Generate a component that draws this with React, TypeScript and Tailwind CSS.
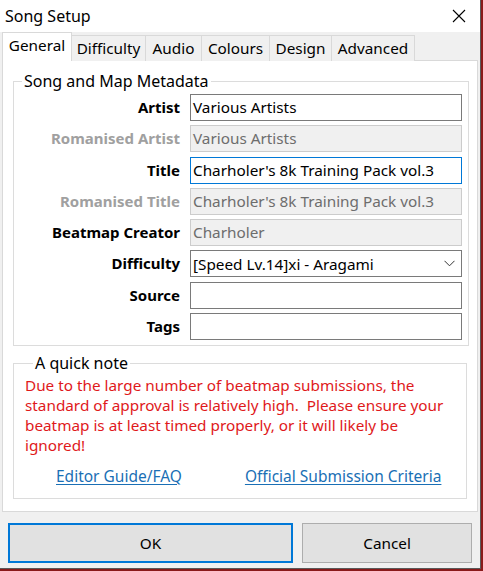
import type { ReactNode } from 'react'

const font = { fontFamily: '"Noto Sans", "Open Sans", "Noto Sans CJK SC", sans-serif' }

interface FieldRowProps {
  label: string
  labelMuted?: boolean
  children: ReactNode
}

function FieldRow({ label, labelMuted, children }: FieldRowProps) {
  return (
    <div className="flex items-center h-[27px]">
      <div
        className={`w-[166px] text-right font-bold text-[15px] leading-none ${labelMuted ? 'text-[#a0a0a0]' : 'text-black'}`}
      >
        {label}
      </div>
      <div className="ml-[10px] w-[272px] h-full">{children}</div>
    </div>
  )
}

function TextBox({ value, variant = 'normal' }: { value?: string; variant?: 'normal' | 'disabled' | 'focus' }) {
  const cls =
    variant === 'disabled'
      ? 'bg-[#f0f0f0] border-[#cccccc] text-[#6d6d6d]'
      : variant === 'focus'
        ? 'bg-white border-[#0078d7] text-black'
        : 'bg-white border-[#7a7a7a] text-black'
  return (
    <div className={`h-full border px-[2px] flex items-center text-[15.3px] whitespace-nowrap overflow-hidden ${cls}`}>
      {value}
    </div>
  )
}

const tabs = [
  { name: 'General', w: 'w-[70px]' },
  { name: 'Difficulty', w: 'w-[74px]' },
  { name: 'Audio', w: 'w-[56px]' },
  { name: 'Colours', w: 'w-[68px]' },
  { name: 'Design', w: 'w-[62px]' },
  { name: 'Advanced', w: 'w-[83px]' },
]

export default function App() {
  return (
    <div className="w-[483px] h-[571px] bg-[#8a1a1a] overflow-hidden" style={font}>
      <div className="w-[481px] h-[569px] bg-[#f0f0f0] border-r border-b border-[#5a5a5a] flex flex-col">
        {/* title bar */}
        <div className="h-[32px] bg-white flex items-center justify-between pl-[5px] pr-[14px] shrink-0">
          <span className="text-[16px] text-black">Song Setup</span>
          <svg width="14" height="14" viewBox="0 0 14 14" className="text-black">
            <path d="M1 1L13 13M13 1L1 13" stroke="currentColor" strokeWidth="1.1" fill="none" />
          </svg>
        </div>

        {/* tab strip */}
        <div className="h-[29px] flex items-end pl-[2px] relative z-10 shrink-0">
          {tabs.map((t, i) =>
            i === 0 ? (
              <div
                key={t.name}
                className={`${t.w} h-[29px] bg-white border border-b-0 border-[#d9d9d9] flex items-center justify-center text-[15.3px] text-black pb-[3px]`}
              >
                {t.name}
              </div>
            ) : (
              <div
                key={t.name}
                className={`${t.w} h-[26px] bg-[#f0f0f0] border border-l-0 border-b-0 border-[#d9d9d9] flex items-center justify-center text-[15.3px] text-black pb-[1px]`}
              >
                {t.name}
              </div>
            ),
          )}
        </div>

        {/* tab page */}
        <div className="ml-[2px] w-[476px] h-[452px] -mt-px bg-white border border-[#d9d9d9] px-[10px] pt-[11px] flex flex-col shrink-0">
          <fieldset className="border border-[#dcdcdc] pl-0 pr-[6px] pt-[4px] pb-[5px] h-[274px]">
            <legend className="ml-[8px] px-[2px] text-[16px] leading-[18px] text-black">Song and Map Metadata</legend>
            <div className="flex flex-col gap-[4.3px]">
              <FieldRow label="Artist">
                <TextBox value="Various Artists" />
              </FieldRow>
              <FieldRow label="Romanised Artist" labelMuted>
                <TextBox value="Various Artists" variant="disabled" />
              </FieldRow>
              <FieldRow label="Title">
                <TextBox value="Charholer's 8k Training Pack vol.3" variant="focus" />
              </FieldRow>
              <FieldRow label="Romanised Title" labelMuted>
                <TextBox value="Charholer's 8k Training Pack vol.3" variant="disabled" />
              </FieldRow>
              <FieldRow label="Beatmap Creator">
                <TextBox value="Charholer" variant="disabled" />
              </FieldRow>
              <FieldRow label="Difficulty">
                <div className="h-full border border-[#7a7a7a] bg-white pl-[2px] pr-[6px] flex items-center justify-between text-[15.3px] text-black">
                  <span>[Speed Lv.14]xi - Aragami</span>
                  <svg width="11" height="7" viewBox="0 0 11 7">
                    <path d="M0.5 0.8L5.5 5.8L10.5 0.8" stroke="#333" strokeWidth="1" fill="none" />
                  </svg>
                </div>
              </FieldRow>
              <FieldRow label="Source">
                <TextBox />
              </FieldRow>
              <FieldRow label="Tags">
                <TextBox />
              </FieldRow>
            </div>
          </fieldset>

          <fieldset className="mt-[8px] border border-[#dcdcdc] pl-[11px] pr-[8px] pt-[3px] h-[145px]">
            <legend className="ml-[8px] px-[2px] text-[16px] leading-[18px] text-black">A quick note</legend>
            <p className="w-[428px] text-[15.3px] leading-[20px] text-[#e0191b]">
              Due to the large number of beatmap submissions, the standard of approval is relatively high.&nbsp; Please
              ensure your beatmap is at least timed properly, or it will likely be ignored!
            </p>
            <div className="flex mt-[11px] text-[15.5px] leading-[20px] text-[#1a6fb5]">
              <span className="ml-[31px] underline underline-offset-2">Editor Guide/FAQ</span>
              <span className="ml-[63px] underline underline-offset-2">Official Submission Criteria</span>
            </div>
          </fieldset>
        </div>

        {/* buttons */}
        <div className="flex gap-[9px] px-[8px] pt-[11px]">
          <button className="w-[287px] h-[40px] bg-[#e1e1e1] border-2 border-[#0078d7] text-[15.3px] text-black">
            OK
          </button>
          <button className="w-[171px] h-[40px] bg-[#e1e1e1] border border-[#adadad] text-[15.3px] text-black">
            Cancel
          </button>
        </div>
      </div>
    </div>
  )
}
